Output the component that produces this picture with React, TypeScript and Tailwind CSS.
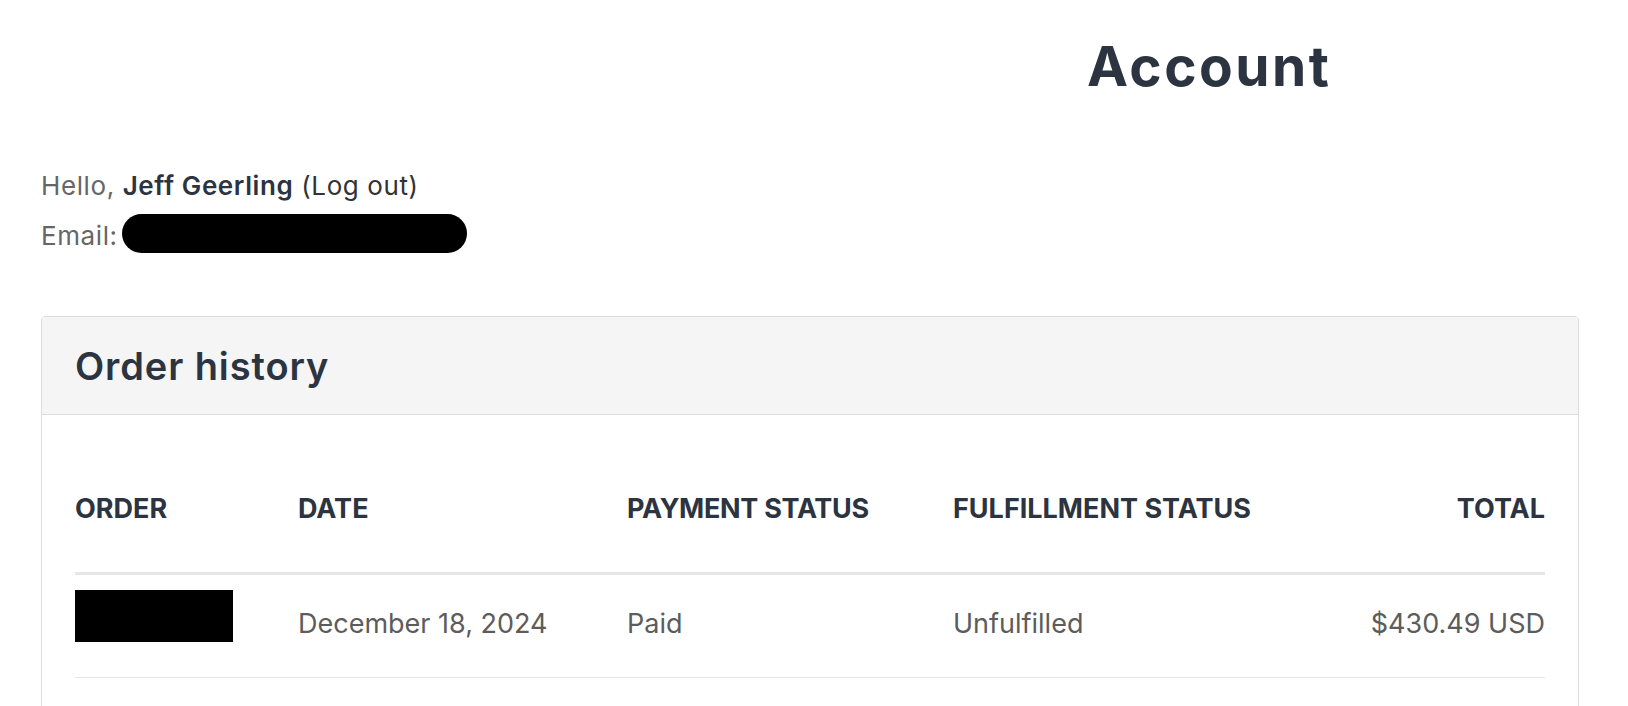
import React from 'react';

const font = { fontFamily: 'Inter, "Noto Sans", sans-serif' };

export default function App() {
  return (
    <div className="min-h-[706px] w-[1628px] bg-white text-[#2b3440]" style={font}>
      {/* Page title */}
      <div className="pt-[39px]">
        <h1 className="ml-[1087px] text-[55px] font-bold leading-[55px] tracking-[2.5px]">Account</h1>
      </div>

      {/* Customer info */}
      <div className="ml-[41px] mt-[69px] text-[26px] tracking-[0.6px] text-[#666]">
        <p className="leading-[45px]">
          Hello, <span className="font-semibold text-[#2b3440]">Jeff Geerling</span>{' '}
          <a className="text-[#333]">(Log out)</a>
        </p>
        <p className="mt-[5px] flex items-center leading-[45px]">
          Email:
          <span className="mb-[4px] ml-[4px] inline-block h-[39px] w-[345px] rounded-full bg-black" />
        </p>
      </div>

      {/* Order history card */}
      <div className="ml-[41px] mt-[58px] w-[1538px] rounded-t-[4px] border border-[#dcdcdc]">
        <div className="flex h-[98px] items-center border-b border-[#dcdcdc] bg-[#f5f5f5] px-[33px]">
          <h2 className="text-[38px] font-semibold leading-none tracking-[0.9px]">Order history</h2>
        </div>

        <div className="px-[33px] pt-[32px]">
          <div className="grid grid-cols-[223px_329px_326px_1fr_auto] text-[27px]">
            <div className="flex h-[125px] items-center font-bold">ORDER</div>
            <div className="flex h-[125px] items-center font-bold">DATE</div>
            <div className="flex h-[125px] items-center font-bold tracking-[-0.3px]">PAYMENT STATUS</div>
            <div className="flex h-[125px] items-center font-bold">FULFILLMENT STATUS</div>
            <div className="flex h-[125px] items-center justify-end font-bold">TOTAL</div>

            <div className="col-span-5 h-[3px] bg-[#e6e6e6]" />

            <div className="flex h-[102px] items-start">
              <span className="mt-[15px] block h-[52px] w-[158px] bg-black" />
            </div>
            <div className="flex h-[102px] items-center pb-[4px] text-[#5c5c5c]">December 18, 2024</div>
            <div className="flex h-[102px] items-center pb-[4px] text-[#5c5c5c]">Paid</div>
            <div className="flex h-[102px] items-center pb-[4px] text-[#5c5c5c]">Unfulfilled</div>
            <div className="flex h-[102px] items-center justify-end pb-[4px] text-[#5c5c5c]">$430.49 USD</div>

            <div className="col-span-5 h-px bg-[#e6e6e6]" />
            <div className="col-span-5 h-[60px]" />
          </div>
        </div>
      </div>
    </div>
  );
}
